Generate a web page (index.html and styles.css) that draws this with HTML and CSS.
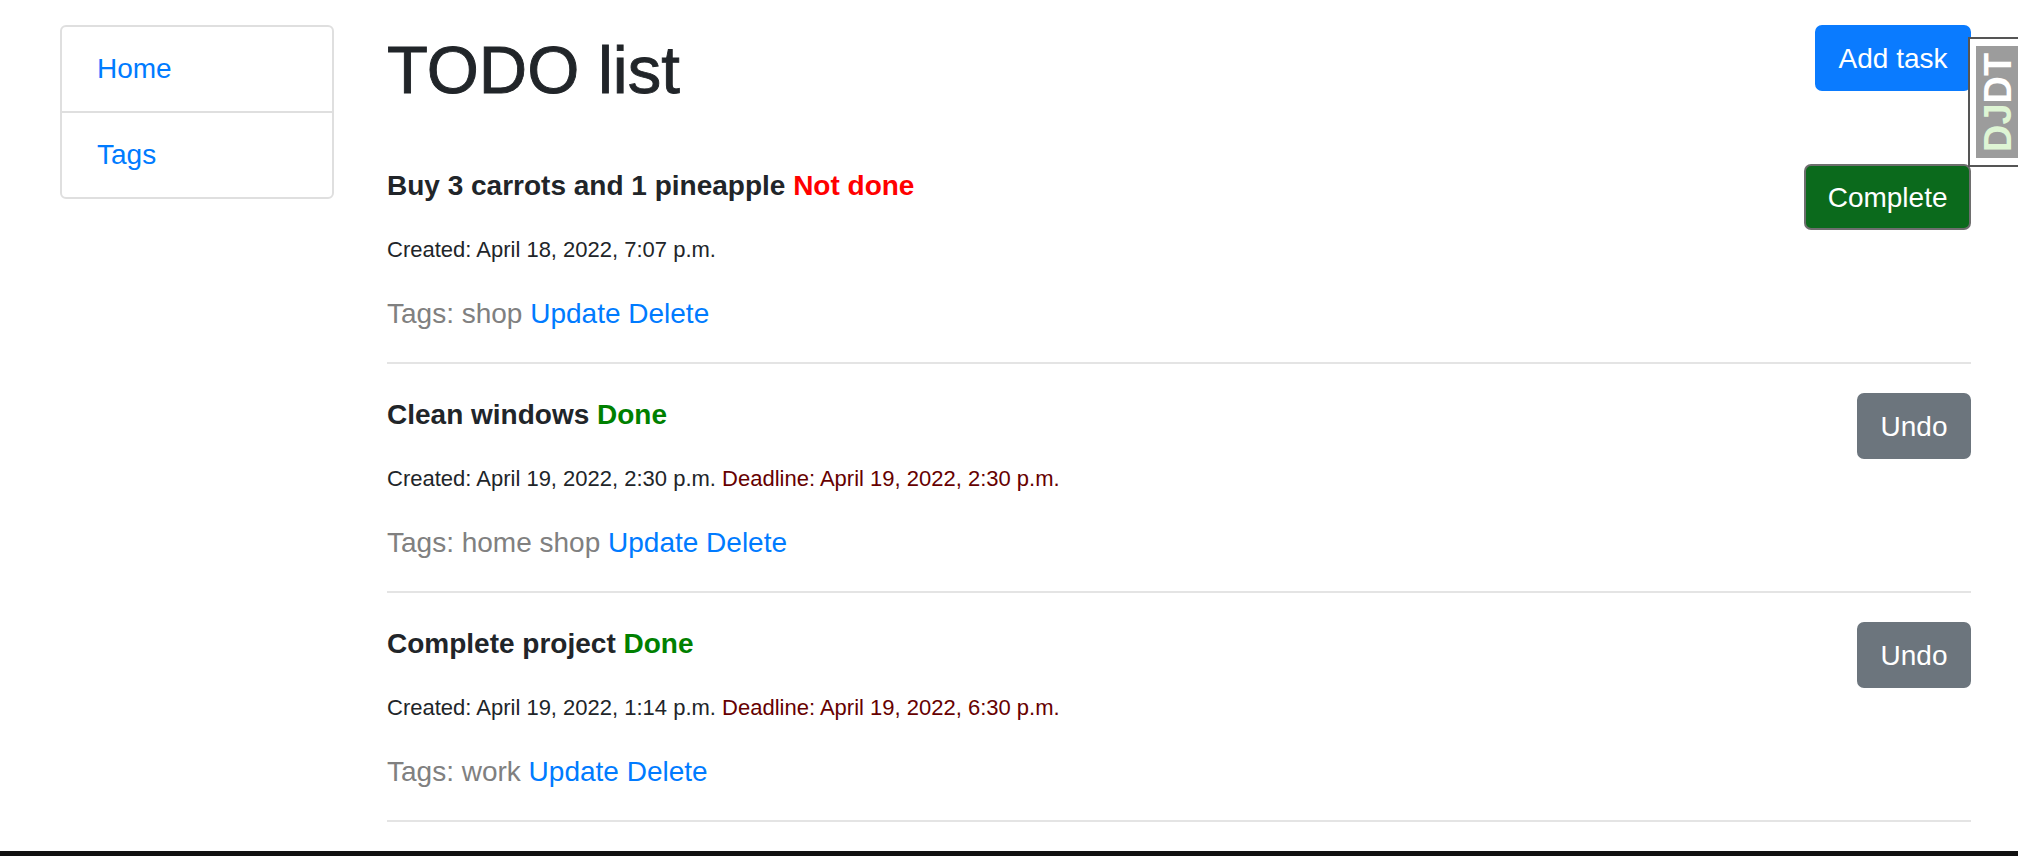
FILE: index.html
```html
<!DOCTYPE html>
<html lang="en">
<head>
<meta charset="utf-8">
<title>TODO list</title>
<link rel="stylesheet" href="styles.css">
</head>
<body>
<div class="page">
  <nav class="sidebar">
    <ul class="list-group">
      <li class="list-item"><a href="#">Home</a></li>
      <li class="list-item"><a href="#">Tags</a></li>
    </ul>
  </nav>
  <main class="main">
    <header class="header">
      <h1 class="title">TODO list</h1>
      <a class="btn btn-primary" href="#">Add task</a>
    </header>

    <section class="task">
      <div class="task-body">
        <h5 class="task-title">Buy 3 carrots and 1 pineapple <span class="status-no">Not done</span></h5>
        <p class="task-dates">Created: April 18, 2022, 7:07 p.m.</p>
        <p class="task-tags">Tags: shop <a href="#">Update</a> <a href="#">Delete</a></p>
      </div>
      <a class="btn btn-success" href="#">Complete</a>
    </section>

    <section class="task">
      <div class="task-body">
        <h5 class="task-title">Clean windows <span class="status-yes">Done</span></h5>
        <p class="task-dates">Created: April 19, 2022, 2:30 p.m. <span class="deadline">Deadline: April 19, 2022, 2:30 p.m.</span></p>
        <p class="task-tags">Tags: home shop <a href="#">Update</a> <a href="#">Delete</a></p>
      </div>
      <a class="btn btn-secondary" href="#">Undo</a>
    </section>

    <section class="task">
      <div class="task-body">
        <h5 class="task-title">Complete project <span class="status-yes">Done</span></h5>
        <p class="task-dates">Created: April 19, 2022, 1:14 p.m. <span class="deadline">Deadline: April 19, 2022, 6:30 p.m.</span></p>
        <p class="task-tags">Tags: work <a href="#">Update</a> <a href="#">Delete</a></p>
      </div>
      <a class="btn btn-secondary" href="#">Undo</a>
    </section>
  </main>
</div>

<div class="djdt-handle">
  <div class="djdt-inner"><span class="djdt-dj">DJ</span>DT</div>
</div>
<div class="screen-edge"></div>
</body>
</html>
```

FILE: styles.css
```css
html, body {
  margin: 0;
  padding: 0;
  background: #ffffff;
}

body {
  font-family: "Liberation Sans", Arial, Helvetica, sans-serif;
  font-size: 28px;
  line-height: 1.5;
  color: #212529;
}

a {
  color: #007bff;
  text-decoration: none;
}

.page {
  display: flex;
  gap: 53px;
  padding: 25px 47px 0 60px;
}

.sidebar {
  flex: none;
  width: 274px;
}

.list-group {
  list-style: none;
  margin: 0;
  padding: 0;
  border: 2px solid #dfdfdf;
  border-radius: 6px;
}

.list-item {
  padding: 21px 35px;
  line-height: 42px;
}

.list-item + .list-item {
  border-top: 2px solid #dfdfdf;
}

.main {
  flex: 1;
  min-width: 0;
}

.header {
  display: flex;
  justify-content: space-between;
  align-items: flex-start;
  margin-bottom: 25px;
}

.title {
  margin: 5px 0 0;
  font-size: 67px;
  line-height: 80px;
  font-weight: 400;
  color: #212529;
  -webkit-text-stroke: 0.9px #212529;
}

.btn {
  display: inline-block;
  flex: none;
  padding: 10.5px 21.5px;
  line-height: 41px;
  font-size: 28px;
  color: #ffffff;
  border: 2px solid transparent;
  border-radius: 7px;
  text-align: center;
}

.btn-primary {
  background: #0a7bff;
  border-color: #0a7bff;
}

.btn-success {
  background: #0b6a1c;
  border-color: #6e6e6e;
}

.btn-secondary {
  background: #6c757d;
  border-color: #6c757d;
}

.task {
  display: flex;
  justify-content: space-between;
  align-items: flex-start;
  padding: 29px 0 28px;
  border-bottom: 2px solid #e4e4e4;
}

.task-body {
  padding-top: 5px;
}

.task-title {
  margin: 0;
  font-size: 28px;
  line-height: 33px;
  font-weight: 700;
  color: #212529;
}

.status-no {
  color: #ff0000;
}

.status-yes {
  color: #008000;
}

.task-dates {
  margin: 31px 0 0;
  font-size: 22px;
  line-height: 33px;
  color: #212529;
}

.deadline {
  color: #660000;
}

.task-tags {
  margin: 27px 0 0;
  line-height: 41px;
  color: #808080;
}

.djdt-handle {
  position: fixed;
  top: 37px;
  right: -2px;
  width: 44px;
  height: 112px;
  padding: 7px 0 7px 6px;
  background: #ffffff;
  border: 2px solid #555555;
  border-right: none;
}

.djdt-inner {
  height: 100%;
  background: #9c9c9c;
  color: #ffffff;
  font-weight: 700;
  font-size: 38px;
  line-height: 44px;
  writing-mode: vertical-rl;
  transform: rotate(180deg);
  text-align: center;
  overflow: hidden;
}

.djdt-dj {
  color: #def5d4;
}

.screen-edge {
  position: fixed;
  left: 0;
  right: 0;
  bottom: 0;
  height: 5px;
  background: #111111;
}
```
